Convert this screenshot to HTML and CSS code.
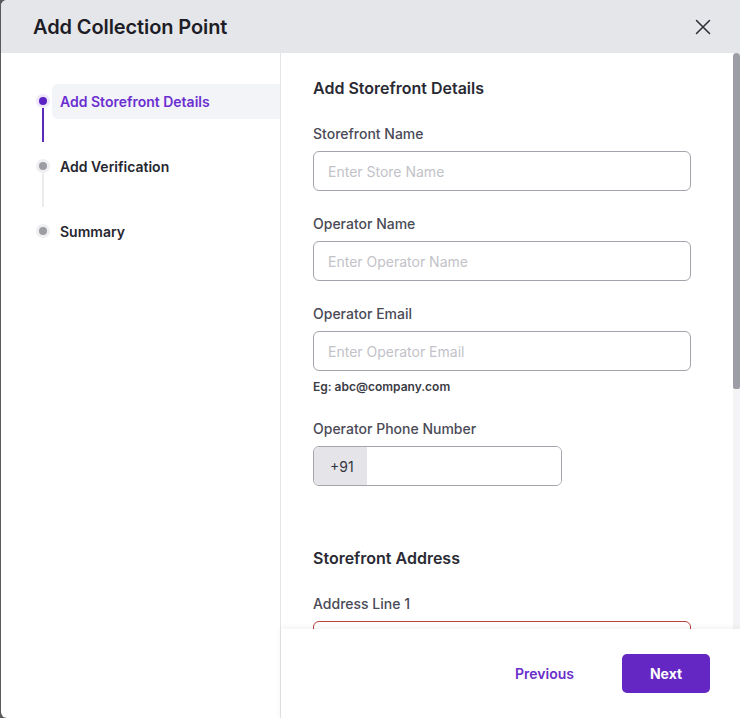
FILE: index.html
```html
<!DOCTYPE html>
<html lang="en">
<head>
<meta charset="utf-8">
<title>Add Collection Point</title>
<link rel="stylesheet" href="styles.css">
</head>
<body>
<div class="modal">
  <header class="modal-header">
    <h1 class="modal-title">Add Collection Point</h1>
    <button class="close-btn" aria-label="Close">
      <svg width="16" height="16" viewBox="0 0 16 16"><path d="M1.5 1.5 L14.5 14.5 M14.5 1.5 L1.5 14.5" stroke="#2b2b33" stroke-width="1.5" stroke-linecap="round" fill="none"/></svg>
    </button>
  </header>
  <div class="modal-main">
    <aside class="sidebar">
      <div class="step step-active">
        <div class="rail"><span class="dot"></span><span class="line"></span></div>
        <div class="step-label">Add Storefront Details</div>
      </div>
      <div class="step">
        <div class="rail"><span class="dot"></span><span class="line"></span></div>
        <div class="step-label">Add Verification</div>
      </div>
      <div class="step">
        <div class="rail"><span class="dot"></span></div>
        <div class="step-label">Summary</div>
      </div>
    </aside>
    <section class="pane">
      <div class="pane-scroll">
        <h2 class="section-title">Add Storefront Details</h2>
        <div class="field">
          <label class="field-label">Storefront Name</label>
          <input class="input" type="text" placeholder="Enter Store Name">
        </div>
        <div class="field">
          <label class="field-label">Operator Name</label>
          <input class="input" type="text" placeholder="Enter Operator Name">
        </div>
        <div class="field field-tight">
          <label class="field-label">Operator Email</label>
          <input class="input" type="text" placeholder="Enter Operator Email">
          <div class="hint">Eg: abc@company.com</div>
        </div>
        <div class="field">
          <label class="field-label">Operator Phone Number</label>
          <div class="phone">
            <span class="phone-prefix">+91</span>
            <input class="phone-input" type="text">
          </div>
        </div>
        <h2 class="section-title section-gap">Storefront Address</h2>
        <div class="field">
          <label class="field-label">Address Line 1</label>
          <input class="input input-error" type="text">
        </div>
      </div>
      <div class="scrollbar"><div class="scroll-thumb"></div></div>
    </section>
    <footer class="modal-footer">
      <button class="btn-prev">Previous</button>
      <button class="btn-next">Next</button>
    </footer>
  </div>
</div>
</body>
</html>
```
FILE: styles.css
```css
* { box-sizing: border-box; }
html, body { margin: 0; height: 100%; }
body {
  background: #5a5a5c;
  font-family: "Inter", "Noto Sans", sans-serif;
  overflow: hidden;
}
.modal {
  margin-left: 1px;
  width: 739px;
  height: 718px;
  background: #fff;
  border-radius: 6px 0 0 6px;
  overflow: hidden;
  display: flex;
  flex-direction: column;
}
.modal-header {
  height: 53px;
  flex: none;
  background: #e5e6ea;
  display: flex;
  align-items: center;
  justify-content: space-between;
  padding: 0 29px 0 32px;
}
.modal-title {
  margin: 0;
  font-size: 20px;
  font-weight: 600;
  color: #1d1d27;
  letter-spacing: -0.1px;
}
.close-btn {
  border: 0;
  background: none;
  padding: 0;
  width: 16px;
  height: 16px;
  display: flex;
  margin-top: 1px;
}
.modal-main {
  flex: 1;
  display: flex;
  position: relative;
  min-height: 0;
}
.sidebar {
  width: 280px;
  flex: none;
  border-right: 1px solid #e4e4e8;
  padding: 31px 0 0 35px;
}
.step {
  display: flex;
  margin-bottom: 7px;
}
.rail {
  width: 14px;
  flex: none;
  display: flex;
  flex-direction: column;
  align-items: center;
  padding-top: 10px;
}
.dot {
  width: 14px;
  height: 14px;
  border-radius: 50%;
  background: #efeff2;
  display: flex;
  align-items: center;
  justify-content: center;
}
.dot::after {
  content: "";
  width: 8px;
  height: 8px;
  border-radius: 50%;
  background: #9c9ca3;
}
.line {
  width: 2px;
  height: 34px;
  background: #ececef;
}
.step-active .dot { background: #efe6fc; }
.step-active .dot::after { background: #5b22c4; }
.step-active .line { background: #5b2ab8; }
.step-label {
  flex: 1;
  height: 35px;
  margin-left: 2px;
  padding-left: 8px;
  display: flex;
  align-items: center;
  font-size: 14px;
  font-weight: 600;
  color: #26262f;
  border-radius: 6px 0 0 6px;
}
.step-active .step-label {
  background: #f3f4f8;
  color: #6b2fd0;
}
.pane {
  flex: 1;
  position: relative;
  overflow: hidden;
}
.pane-scroll {
  height: 100%;
  overflow: hidden;
  padding: 24px 0 0 32px;
}
.scrollbar {
  position: absolute;
  top: 0;
  right: 0;
  bottom: 0;
  width: 7px;
  background: #f4f4f7;
}
.scroll-thumb {
  height: 336px;
  background: #9d9da5;
  border-radius: 4px 4px 3px 3px;
}
.section-title {
  margin: 0 0 25px;
  font-size: 16px;
  line-height: 22px;
  font-weight: 600;
  color: #2a2a34;
}
.section-gap { margin-top: 61px; }
.field {
  width: 378px;
  margin-bottom: 23px;
}
.field-tight { margin-bottom: 24px; }
.field-label {
  display: block;
  font-size: 14px;
  line-height: 20px;
  font-weight: 500;
  color: #4a4a56;
  margin-bottom: 7px;
}
.input {
  display: block;
  width: 100%;
  height: 40px;
  border: 1px solid #a4a4ac;
  border-radius: 6px;
  padding: 0 14px;
  font-family: inherit;
  font-size: 14px;
  color: #222;
  background: #fff;
  outline: none;
}
.input::placeholder { color: #c2c2c8; }
.input-error { border-color: #b8413f; }
.hint {
  margin-top: 8px;
  font-size: 12px;
  line-height: 16px;
  font-weight: 600;
  color: #3c3c45;
}
.phone {
  margin-top: 3px;
  width: 249px;
  height: 40px;
  border: 1px solid #a4a4ac;
  border-radius: 6px;
  display: flex;
  overflow: hidden;
}
.phone-prefix {
  width: 53px;
  flex: none;
  background: #e4e4e9;
  display: flex;
  align-items: center;
  padding-left: 16px;
  font-size: 14px;
  color: #34343c;
}
.phone-input {
  flex: 1;
  min-width: 0;
  border: 0;
  outline: none;
  font-family: inherit;
  background: #fff;
}
.modal-footer {
  position: absolute;
  left: 280px;
  right: 0;
  bottom: 0;
  height: 89px;
  background: #fff;
  box-shadow: 0 -1px 6px rgba(0, 0, 0, 0.07);
  display: flex;
  align-items: center;
  justify-content: flex-end;
  gap: 24px;
  padding-right: 30px;
}
.btn-prev {
  border: 0;
  background: none;
  padding: 0 24px;
  font-family: inherit;
  font-size: 14px;
  font-weight: 600;
  color: #6a2ec9;
}
.btn-next {
  width: 88px;
  height: 39px;
  border: 0;
  border-radius: 5px;
  background: #6427c3;
  color: #fff;
  font-family: inherit;
  font-size: 14px;
  font-weight: 700;
}
```
